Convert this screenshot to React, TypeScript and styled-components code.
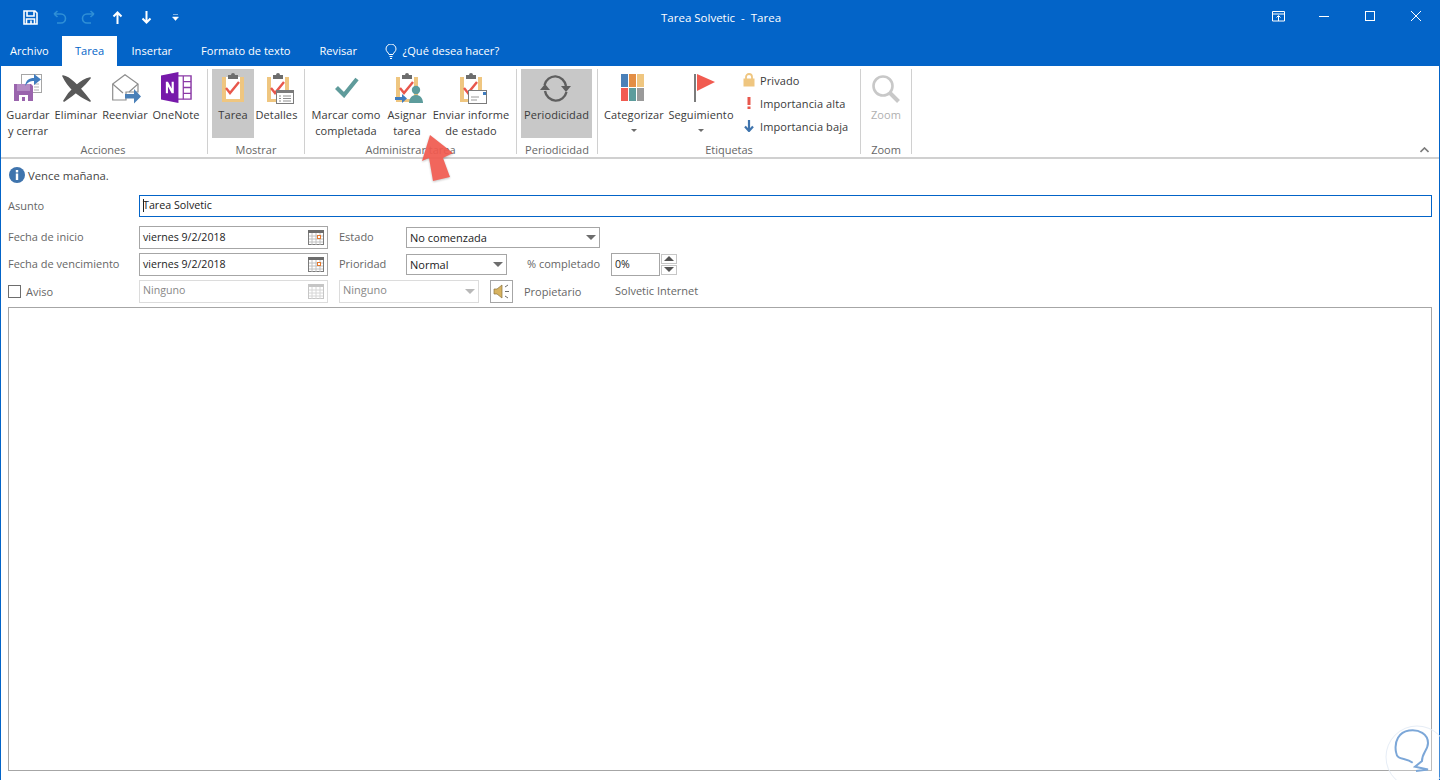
import React from 'react';
import styled, { createGlobalStyle } from 'styled-components';

const GlobalStyle = createGlobalStyle`
  html, body {
    margin: 0;
    padding: 0;
    background: #fff;
    overflow: hidden;
  }
  * {
    box-sizing: border-box;
  }
`;

const BLUE = '#0364c8';

// clipboard shared by Tarea, Detalles, Asignar and Enviar
const Clipboard = () => (
  <>
    <rect x="1" y="4" width="22" height="25" fill="#efc680" />
    <rect x="5" y="4" width="14" height="22" fill="#fff" />
    <path d="M7 2h3a2 2 0 0 1 4 0h3v4H7z" fill="#6d6d6d" />
    <path d="M5 15l4 5 9-11" fill="none" stroke="#e8574c" strokeWidth="2.4" />
  </>
);

const icons: Record<string, React.ReactNode> = {
  guardar: (
    <svg width="29" height="28" viewBox="0 0 29 28">
      <rect x="7.500" y="0.500" width="20" height="18" fill="#fff" stroke="#a6a6a6" />
      <path d="M20 10h5M20 13h5M20 16h5" stroke="#b0b0b0" />
      <path d="M0 10h17l2 2v15H0z" fill="#9a64ad" />
      <rect x="3" y="10" width="13" height="7" fill="#b48cc4" />
      <rect x="5" y="21" width="9" height="6" fill="#fff" />
      <rect x="8" y="23" width="3" height="4" fill="#9a64ad" />
      <path d="M11 12C12 6 15 4 20 4V0l7 5.500-7 5.500V7c-4 0-6 1-9 5z" fill="#3f7cbf" />
    </svg>
  ),
  eliminar: (
    <svg width="29" height="27" viewBox="0 0 29 27">
      <path d="M1 1C8 2 16 10 28 26 19 22 7 14 1 1z" fill="#595959" stroke="#595959" strokeWidth="1.600" strokeLinejoin="round" />
      <path d="M28 3C19 5 8 15 2 26 11 20 22 11 28 3z" fill="#595959" stroke="#595959" strokeWidth="1.600" strokeLinejoin="round" />
    </svg>
  ),
  reenviar: (
    <svg width="29" height="30" viewBox="0 0 29 30">
      <path d="M0.700 10L13 0.700 26 10v8H14v8H0.700z" fill="#fff" stroke="#8e8e8e" strokeWidth="1.200" />
      <path d="M0.700 10L11 19M26 10L17 18" fill="none" stroke="#8e8e8e" strokeWidth="1.200" />
      <path d="M13 20h9v-5l7 7.500-7 7v-5h-9z" fill="#4a80b8" />
    </svg>
  ),
  onenote: (
    <svg width="31" height="31" viewBox="0 0 32 32">
      <path d="M16 4h15v24H16z" fill="#fff" stroke="#8b3aa6" strokeWidth="1.500" />
      <path d="M23 4v24M23 10h8M23 16h8M23 22h8" stroke="#8b3aa6" strokeWidth="1.300" />
      <path d="M0 3.500L18 0v32L0 28.500z" fill="#7719aa" />
      <path d="M5 22V10h2.200l3.800 7v-7h2.200v12H11l-3.800-7v7z" fill="#fff" />
    </svg>
  ),
  tarea: (
    <svg width="24" height="30" viewBox="0 0 24 30">
      <Clipboard />
    </svg>
  ),
  detalles: (
    <svg width="28" height="31" viewBox="0 0 28 31">
      <Clipboard />
      <rect x="10.500" y="17.500" width="17" height="13" fill="#fff" stroke="#7b7b7b" />
      <rect x="10.500" y="17.500" width="17" height="2.500" fill="#7b7b7b" />
      <path d="M13 23h2M17 23h8M13 25.500h2M17 25.500h8M13 28h2M17 28h8" stroke="#8e8e8e" />
    </svg>
  ),
  marcar: (
    <svg width="24" height="21" viewBox="0 0 24 21">
      <path d="M1.500 10.500l7.500 7.500L22 2" fill="none" stroke="#5f9b9b" strokeWidth="4.200" />
    </svg>
  ),
  asignar: (
    <svg width="28" height="30" viewBox="0 0 28 30">
      <Clipboard />
      <circle cx="21" cy="17" r="4.200" fill="#5d9c9c" />
      <path d="M14 30c0-2 1-8 7-8s7 6 7 8z" fill="#5d9c9c" />
      <path d="M0 24h7v-3l5 4.500-5 4.500v-3H0z" fill="#3f7cbf" />
    </svg>
  ),
  enviar: (
    <svg width="28" height="31" viewBox="0 0 28 31">
      <Clipboard />
      <rect x="9.500" y="17.500" width="18" height="13" fill="#fff" stroke="#7b7b7b" />
      <rect x="24" y="19" width="3" height="3" fill="#3f7cbf" />
      <path d="M12 24h8M12 27h6" stroke="#9a9a9a" />
    </svg>
  ),
  periodicidad: (
    <svg width="31" height="27" viewBox="0 0 31 27">
      <path d="M4.500 10A11 11.500 0 0 1 26 11" fill="none" stroke="#5f5f5f" strokeWidth="2.400" />
      <path d="M21 11h10l-5 6z" fill="#5f5f5f" />
      <path d="M26.500 17A11 11.500 0 0 1 5 16" fill="none" stroke="#5f5f5f" strokeWidth="2.400" />
      <path d="M0 15h10L5 9z" fill="#5f5f5f" />
    </svg>
  ),
  categorizar: (
    <svg width="23" height="27" viewBox="0 0 23 27">
      <rect x="0" y="0" width="7" height="13" fill="#4a80b8" />
      <rect x="8" y="0" width="7" height="13" fill="#e38e45" />
      <rect x="16" y="0" width="7" height="13" fill="#efc680" />
      <rect x="0" y="14" width="7" height="13" fill="#f15b50" />
      <rect x="8" y="14" width="7" height="13" fill="#5d9c9c" />
      <rect x="16" y="14" width="7" height="13" fill="#9a9a9a" />
    </svg>
  ),
  seguimiento: (
    <svg width="21" height="28" viewBox="0 0 21 28">
      <rect x="0" y="0" width="2" height="28" fill="#7b7b7b" />
      <path d="M3 0l18 8L3 17z" fill="#f15b50" />
    </svg>
  ),
  zoom: (
    <svg width="28" height="28" viewBox="0 0 28 28">
      <circle cx="11" cy="11" r="9.500" fill="none" stroke="#c8c8c8" strokeWidth="2.600" />
      <path d="M18 18l8.500 8.500" stroke="#c8c8c8" strokeWidth="4" />
    </svg>
  ),
};

const qatIcons = [
  <path key="save" d="M1 1h11l2 2v11H1zM4 1v5h7V1M3.500 14V9h8v5M8 10.500v3" fill="none" stroke="#fff" strokeWidth="1.600" />,
  <path key="undo" d="M2 4l3.500-3M2 4l3.500 3M2 4h7a4 4 0 0 1 0 9H5" fill="none" stroke="#2f8fd6" strokeWidth="1.600" />,
  <path key="redo" d="M13 4L9.500 1M13 4L9.500 7M13 4H6a4 4 0 0 0 0 9h4" fill="none" stroke="#2f8fd6" strokeWidth="1.600" />,
  <path key="up" d="M7.500 14V3M3.500 6.500l4-4 4 4" fill="none" stroke="#fff" strokeWidth="2" />,
  <path key="down" d="M7.500 1v11M3.500 8.500l4 4 4-4" fill="none" stroke="#fff" strokeWidth="2" />,
];

type BigButton = {
  icon: string;
  lines: string[];
  width: number;
  active?: boolean;
  caret?: boolean;
  disabled?: boolean;
  iconTop?: number;
  shift?: number;
};
type Group = { label: string; width: number; pad: number; labelPad?: number; buttons: BigButton[]; small?: boolean };

const groups: Group[] = [
  {
    label: 'Acciones',
    width: 204,
    pad: 0,
    labelPad: 5,
    buttons: [
      { icon: 'guardar', lines: ['Guardar', 'y cerrar'], width: 48 },
      { icon: 'eliminar', lines: ['Eliminar'], width: 48, iconTop: 6 },
      { icon: 'reenviar', lines: ['Reenviar'], width: 50, shift: 1 },
      { icon: 'onenote', lines: ['OneNote'], width: 52, iconTop: 3 },
    ],
  },
  {
    label: 'Mostrar',
    width: 97,
    pad: 4,
    buttons: [
      { icon: 'tarea', lines: ['Tarea'], width: 42, active: true, iconTop: 4 },
      { icon: 'detalles', lines: ['Detalles'], width: 45, iconTop: 4, shift: 3 },
    ],
  },
  {
    label: 'Administrar tarea',
    width: 212,
    pad: 3,
    buttons: [
      { icon: 'marcar', lines: ['Marcar como', 'completada'], width: 76, iconTop: 8, shift: 1 },
      { icon: 'asignar', lines: ['Asignar', 'tarea'], width: 46, iconTop: 4, shift: 2 },
      { icon: 'enviar', lines: ['Enviar informe', 'de estado'], width: 82, iconTop: 4, shift: 2 },
    ],
  },
  {
    label: 'Periodicidad',
    width: 81,
    pad: 4,
    buttons: [{ icon: 'periodicidad', lines: ['Periodicidad'], width: 71, active: true, iconTop: 6, shift: -1 }],
  },
  {
    label: 'Etiquetas',
    width: 263,
    pad: 4,
    small: true,
    buttons: [
      { icon: 'categorizar', lines: ['Categorizar'], width: 64, caret: true, iconTop: 5, shift: -1.500 },
      { icon: 'seguimiento', lines: ['Seguimiento'], width: 70, caret: true, iconTop: 5, shift: 3 },
    ],
  },
  {
    label: 'Zoom',
    width: 51,
    pad: 5,
    buttons: [{ icon: 'zoom', lines: ['Zoom'], width: 40, disabled: true, iconTop: 6 }],
  },
];

const CalendarIcon = ({ faded }: { faded?: boolean }) => (
  <svg width="16" height="15" viewBox="0 0 16 15">
    <rect x="0.500" y="0.500" width="15" height="14" fill="#fff" stroke={faded ? '#c6c6c6' : '#7b7b7b'} />
    <rect x="0" y="0" width="16" height="3" fill={faded ? '#c6c6c6' : '#6d6d6d'} />
    <path d="M4 3v12M8 3v12M12 3v12M1 6h14M1 9h14M1 12h14" stroke={faded ? '#d6d6d6' : '#c0c0c0'} />
    {!faded && <rect x="9.500" y="5.500" width="3" height="3" fill="#fff" stroke="#e3782e" />}
  </svg>
);

const App = () => {
  return (
    <Window>
      <GlobalStyle />
      <TitleBar>
        <Qat>
          {qatIcons.map((q, i) => (
            <QatButton key={i}>
              <svg width="15" height="15" viewBox="0 0 15 15">
                {q}
              </svg>
            </QatButton>
          ))}
          <QatButton>
            <svg width="7" height="7" viewBox="0 0 7 7">
              <path d="M1 0.500h5M0.500 3h6L3.500 6.500z" fill="#fff" stroke="#fff" strokeWidth="0.500" />
            </svg>
          </QatButton>
        </Qat>
        <Title>Tarea Solvetic&nbsp; -&nbsp; Tarea</Title>
        <WinButtons>
          <WinButton>
            <svg width="13" height="11" viewBox="0 0 13 11">
              <path d="M0.500 0.500h12v9.500h-12zM0.500 3h12M6.500 10V5M4.500 6.500l2-2 2 2" fill="none" stroke="#fff" />
            </svg>
          </WinButton>
          <WinButton>
            <svg width="10" height="1" viewBox="0 0 10 1">
              <rect width="10" height="1" fill="#fff" />
            </svg>
          </WinButton>
          <WinButton>
            <svg width="10" height="10" viewBox="0 0 10 10">
              <rect x="0.500" y="0.500" width="9" height="9" fill="none" stroke="#fff" />
            </svg>
          </WinButton>
          <WinButton>
            <svg width="10" height="10" viewBox="0 0 10 10">
              <path d="M0 0l10 10M10 0L0 10" stroke="#fff" />
            </svg>
          </WinButton>
        </WinButtons>
      </TitleBar>

      <TabRow>
        <FileTab>Archivo</FileTab>
        <ActiveTab>Tarea</ActiveTab>
        <Tab>Insertar</Tab>
        <Tab>Formato de texto</Tab>
        <Tab>Revisar</Tab>
        <TellMe>
          <svg width="12" height="15" viewBox="0 0 12 15">
            <path d="M4 10.500C3.500 8.500 1 7.500 1 5a5 5 0 0 1 10 0c0 2.500-2.500 3.500-3 5.500zM4.500 12.500h3M5 14.500h2" fill="none" stroke="#fff" />
          </svg>
          ¿Qué desea hacer?
        </TellMe>
      </TabRow>

      <Main>
        <Ribbon>
          {groups.map((g) => (
            <RibbonGroup key={g.label} $width={g.width}>
              <GroupButtons $pad={g.pad}>
                {g.buttons.map((b) => (
                  <RibbonButton key={b.icon} $width={b.width} $active={b.active} $disabled={b.disabled}>
                    <IconSlot $top={b.iconTop ?? 5} $shift={b.shift ?? 0}>
                      {icons[b.icon]}
                    </IconSlot>
                    {b.lines.map((l) => (
                      <span key={l}>{l}</span>
                    ))}
                    {b.caret && <Caret />}
                  </RibbonButton>
                ))}
                {g.small && (
                  <SmallColumn>
                    <SmallItem>
                      <svg width="12" height="14" viewBox="0 0 12 14">
                        <path d="M3 6V4a3 3 0 0 1 6 0v2" fill="none" stroke="#efc680" strokeWidth="1.800" />
                        <rect x="0.500" y="5.500" width="11" height="8" fill="#efc680" />
                      </svg>
                      Privado
                    </SmallItem>
                    <SmallItem>
                      <svg width="12" height="12" viewBox="0 0 12 12">
                        <rect x="4.500" y="0" width="3" height="8" fill="#e8574c" />
                        <rect x="4.500" y="9.500" width="3" height="2.500" fill="#e8574c" />
                      </svg>
                      Importancia alta
                    </SmallItem>
                    <SmallItem>
                      <svg width="12" height="12" viewBox="0 0 12 12">
                        <path d="M6 0v10M2 6.500l4 4.500 4-4.500" fill="none" stroke="#3f74ad" strokeWidth="2.200" />
                      </svg>
                      Importancia baja
                    </SmallItem>
                  </SmallColumn>
                )}
              </GroupButtons>
              <GroupLabel $right={g.labelPad ?? 0}>{g.label}</GroupLabel>
            </RibbonGroup>
          ))}
          <Collapse>
            <svg width="9" height="6" viewBox="0 0 9 6">
              <path d="M0.500 5l4-4 4 4" fill="none" stroke="#7b7b7b" strokeWidth="1.600" />
            </svg>
          </Collapse>
        </Ribbon>

        <Form>
          <InfoRow>
            <svg width="16" height="16" viewBox="0 0 16 16">
              <circle cx="8" cy="8" r="8" fill="#3f74ad" />
              <rect x="6.800" y="3" width="2.400" height="2.400" fill="#fff" />
              <rect x="6.800" y="6.500" width="2.400" height="6.500" fill="#fff" />
            </svg>
            Vence mañana.
          </InfoRow>
          <SubjectRow>
            <Label $width={131} $lift={1}>Asunto</Label>
            <SubjectInput>
              <Cursor />
              Tarea Solvetic
            </SubjectInput>
          </SubjectRow>
          <DateRow>
            <Label $width={131}>Fecha de inicio</Label>
            <Field $width={189}>
              <span>viernes 9/2/2018</span>
              <CalendarIcon />
            </Field>
            <Label $width={67} $left={11}>Estado</Label>
            <Select $width={194}>
              <span>No comenzada</span>
              <SelectCaret />
            </Select>
          </DateRow>
          <DateRow>
            <Label $width={131}>Fecha de vencimiento</Label>
            <Field $width={189}>
              <span>viernes 9/2/2018</span>
              <CalendarIcon />
            </Field>
            <Label $width={67} $left={11}>Prioridad</Label>
            <Select $width={101}>
              <span>Normal</span>
              <SelectCaret />
            </Select>
            <Label $width={84} $left={20}>% completado</Label>
            <Field $width={49}>
              <span>0%</span>
            </Field>
            <Spinner>
              <SpinButton $up />
              <SpinButton />
            </Spinner>
          </DateRow>
          <DateRow>
            <AvisoLabel>
              <CheckBox />
              Aviso
            </AvisoLabel>
            <Field $width={189} $off>
              <span>Ninguno</span>
              <CalendarIcon faded />
            </Field>
            <Select $width={140} $off $left={11}>
              <span>Ninguno</span>
              <SelectCaret $off />
            </Select>
            <SoundButton>
              <svg width="17" height="15" viewBox="0 0 17 15">
                <path d="M1 5h3l5-4v13l-5-4H1z" fill="#d8b35f" stroke="#8a7440" strokeWidth="0.700" />
                <path d="M12 3l3-2M12 7.500h4M12 12l3 2" stroke="#6d6d6d" />
              </svg>
            </SoundButton>
            <Label $width={91} $left={11} $lift={1}>Propietario</Label>
            <Owner>Solvetic Internet</Owner>
          </DateRow>
          <Body />
        </Form>

        <PointerArrow viewBox="0 0 36 50" width="36" height="50">
          <path d="M10 1L33 19 23 24 30 43 13 47 9 24 2 27z" fill="#f15b50" />
        </PointerArrow>
        <Watermark viewBox="0 0 64 64" width="64" height="64">
          <circle cx="32" cy="32" r="31" fill="rgba(255,255,255,0.250)" stroke="#e6edf6" />
          <path
            d="M27.700 37.700C20 32 12 36 11 27 9 16 14 7 24 5.500 34 4 43 9 43 18c0 7-6 10-6 18l-7 5.700 13 2.800-12 1.500"
            fill="none"
            stroke="#7ca7d8"
            strokeWidth="2"
          />
        </Watermark>
      </Main>
    </Window>
  );
};

export default App;

const Window = styled.div`
  width: 1440px;
  height: 780px;
  background: ${BLUE};
  display: flex;
  flex-direction: column;
  padding: 0 1px;
  font-family: 'Open Sans', 'Liberation Sans', sans-serif;
  font-size: 11px;
  color: #444;
  overflow: hidden;
`;

const TitleBar = styled.div`
  height: 36px;
  display: flex;
  align-items: center;
  position: relative;
  color: #fff;
`;

const Qat = styled.div`
  display: flex;
  align-items: center;
  padding: 0 0 2px 14.500px;
`;

const QatButton = styled.div`
  width: 29px;
  display: flex;
  justify-content: center;
  align-items: center;
`;

const Title = styled.div`
  position: absolute;
  left: 660px;
  top: 10px;
  font-size: 11.500px;
  white-space: nowrap;
`;

const WinButtons = styled.div`
  margin-left: auto;
  display: flex;
  align-items: center;
  padding-bottom: 4px;
`;

const WinButton = styled.div`
  width: 46px;
  height: 20px;
  display: flex;
  justify-content: center;
  align-items: center;
`;

const TabRow = styled.div`
  height: 30px;
  display: flex;
  align-items: stretch;
  font-size: 11.100px;
`;

const Tab = styled.div`
  padding: 7px 14.500px 0;
  white-space: nowrap;
  color: #fff;
`;

const FileTab = styled(Tab)`
  width: 61px;
  padding: 7px 0 0 9px;
`;

const ActiveTab = styled(Tab)`
  width: 55px;
  padding: 7px 0 0;
  text-align: center;
  background: #fff;
  color: ${BLUE};
`;

const TellMe = styled.div`
  display: flex;
  align-items: flex-start;
  gap: 5px;
  padding: 7px 0 0 14px;
  color: #fff;
  white-space: nowrap;
  svg {
    margin-top: 1px;
  }
`;

const Main = styled.div`
  flex: 1;
  background: #fff;
  display: flex;
  flex-direction: column;
  position: relative;
  min-height: 0;
`;

const Ribbon = styled.div`
  height: 93px;
  flex: none;
  display: flex;
  border-bottom: 2px solid #d0d0d0;
  position: relative;
  padding-left: 3px;
`;

const RibbonGroup = styled.div<{ $width: number }>`
  width: ${(p) => p.$width}px;
  height: 85px;
  margin-top: 3px;
  display: flex;
  flex-direction: column;
  border-right: 1px solid #d0d0d0;
`;

const GroupButtons = styled.div<{ $pad: number }>`
  height: 69px;
  flex: none;
  display: flex;
  padding-left: ${(p) => p.$pad}px;
`;

const RibbonButton = styled.div<{ $width: number; $active?: boolean; $disabled?: boolean }>`
  width: ${(p) => p.$width}px;
  height: 69px;
  display: flex;
  flex-direction: column;
  align-items: center;
  font-size: 11px;
  letter-spacing: 0.100px;
  line-height: 16px;
  white-space: nowrap;
  color: ${(p) => (p.$disabled ? '#b0b0b0' : '#3a3a3a')};
  background: ${(p) => (p.$active ? '#c8c8c8' : 'transparent')};
`;

const IconSlot = styled.div<{ $top: number; $shift: number }>`
  height: 38px;
  padding-top: ${(p) => p.$top}px;
  margin-left: ${(p) => p.$shift * 2}px;
  display: flex;
  justify-content: center;
  align-items: flex-start;
  flex: none;
`;

const Caret = styled.i`
  display: block;
  width: 0;
  height: 0;
  margin-top: 6px;
  border-left: 3px solid transparent;
  border-right: 3px solid transparent;
  border-top: 3px solid #6d6d6d;
`;

const SmallColumn = styled.div`
  display: flex;
  flex-direction: column;
  gap: 5px;
  padding: 2px 0 0 7px;
`;

const SmallItem = styled.div`
  display: flex;
  align-items: center;
  gap: 5px;
  height: 18px;
  font-size: 11px;
  letter-spacing: 0.100px;
  white-space: nowrap;
  color: #3a3a3a;
  svg {
    flex: none;
  }
`;

const GroupLabel = styled.div<{ $right: number }>`
  padding: 5px ${(p) => p.$right}px 0 0;
  line-height: 14px;
  text-align: center;
  font-size: 11px;
  color: #666;
  white-space: nowrap;
`;

const Collapse = styled.div`
  position: absolute;
  right: 10px;
  top: 81px;
  line-height: 0;
`;

const Form = styled.div`
  flex: 1;
  display: flex;
  flex-direction: column;
  padding: 7px 7px 9px;
  min-height: 0;
`;

const InfoRow = styled.div`
  height: 18px;
  display: flex;
  align-items: center;
  gap: 3px;
  padding-left: 1px;
  font-size: 11.300px;
  color: #444;
  margin-bottom: 11px;
  svg {
    flex: none;
  }
`;

const SubjectRow = styled.div`
  display: flex;
  align-items: center;
  height: 22px;
  margin-bottom: 9px;
`;

const Label = styled.div<{ $width: number; $left?: number; $lift?: number }>`
  width: ${(p) => p.$width}px;
  margin-left: ${(p) => p.$left ?? 0}px;
  flex: none;
  font-size: 11px;
  color: #666;
  white-space: nowrap;
  padding-bottom: ${(p) => p.$lift ?? 3}px;
`;

const SubjectInput = styled.div`
  flex: 1;
  height: 22px;
  border: 1px solid ${BLUE};
  display: flex;
  align-items: center;
  padding: 0 0 2px 3px;
  font-size: 10.700px;
  color: #222;
`;

const Cursor = styled.span`
  display: inline-block;
  width: 1px;
  height: 13px;
  background: #222;
  margin-right: -1px;
`;

const DateRow = styled.div`
  display: flex;
  align-items: center;
  height: 23px;
  margin-bottom: 4px;
`;

const Field = styled.div<{ $width: number; $off?: boolean }>`
  width: ${(p) => p.$width}px;
  height: 23px;
  flex: none;
  border: 1px solid ${(p) => (p.$off ? '#dcdcdc' : '#a6a6a6')};
  display: flex;
  align-items: center;
  justify-content: space-between;
  padding: 0 3px;
  font-size: 10.600px;
  color: ${(p) => (p.$off ? '#888' : '#222')};
  span {
    margin-bottom: ${(p) => (p.$off ? 4 : 2)}px;
  }
`;

const Select = styled.div<{ $width: number; $off?: boolean; $left?: number }>`
  width: ${(p) => p.$width}px;
  margin-left: ${(p) => p.$left ?? 0}px;
  height: ${(p) => (p.$off ? 23 : 21)}px;
  flex: none;
  border: 1px solid ${(p) => (p.$off ? '#dcdcdc' : '#a6a6a6')};
  display: flex;
  align-items: center;
  justify-content: space-between;
  padding: 0 3px;
  font-size: 11px;
  color: ${(p) => (p.$off ? '#888' : '#222')};
  span {
    margin-bottom: ${(p) => (p.$off ? 4 : 1)}px;
  }
`;

const SelectCaret = styled.i<{ $off?: boolean }>`
  width: 0;
  height: 0;
  border-left: 5px solid transparent;
  border-right: 5px solid transparent;
  border-top: 5px solid ${(p) => (p.$off ? '#b8b8b8' : '#6d6d6d')};
`;

const Spinner = styled.div`
  display: flex;
  flex-direction: column;
  gap: 1px;
  margin-left: 1px;
`;

const SpinButton = styled.div<{ $up?: boolean }>`
  width: 16px;
  height: 10px;
  border: 1px solid #c6c6c6;
  position: relative;
  &::after {
    content: '';
    position: absolute;
    left: 2px;
    top: 1px;
    border-left: 5px solid transparent;
    border-right: 5px solid transparent;
    ${(p) => (p.$up ? 'border-bottom: 5px solid #555;' : 'border-top: 5px solid #555;')}
  }
`;

const AvisoLabel = styled.div`
  width: 131px;
  flex: none;
  display: flex;
  align-items: center;
  gap: 5px;
  font-size: 11px;
  color: #666;
`;

const CheckBox = styled.span`
  width: 13px;
  height: 13px;
  border: 1px solid #6d6d6d;
  background: #fff;
`;

const SoundButton = styled.div`
  width: 23px;
  height: 23px;
  margin-left: 11px;
  flex: none;
  border: 1px solid #a6a6a6;
  display: flex;
  align-items: center;
  justify-content: center;
`;

const Owner = styled.div`
  font-size: 11px;
  color: #666;
  white-space: nowrap;
  padding-bottom: 2px;
`;

const Body = styled.div`
  flex: 1;
  border: 1px solid #a6a6a6;
`;

const PointerArrow = styled.svg`
  position: absolute;
  left: 419px;
  top: 68px;
  opacity: 0.93;
  filter: drop-shadow(0 1px 1px rgba(0, 0, 0, 0.25));
`;

const Watermark = styled.svg`
  position: absolute;
  right: -10px;
  bottom: -9px;
`;
